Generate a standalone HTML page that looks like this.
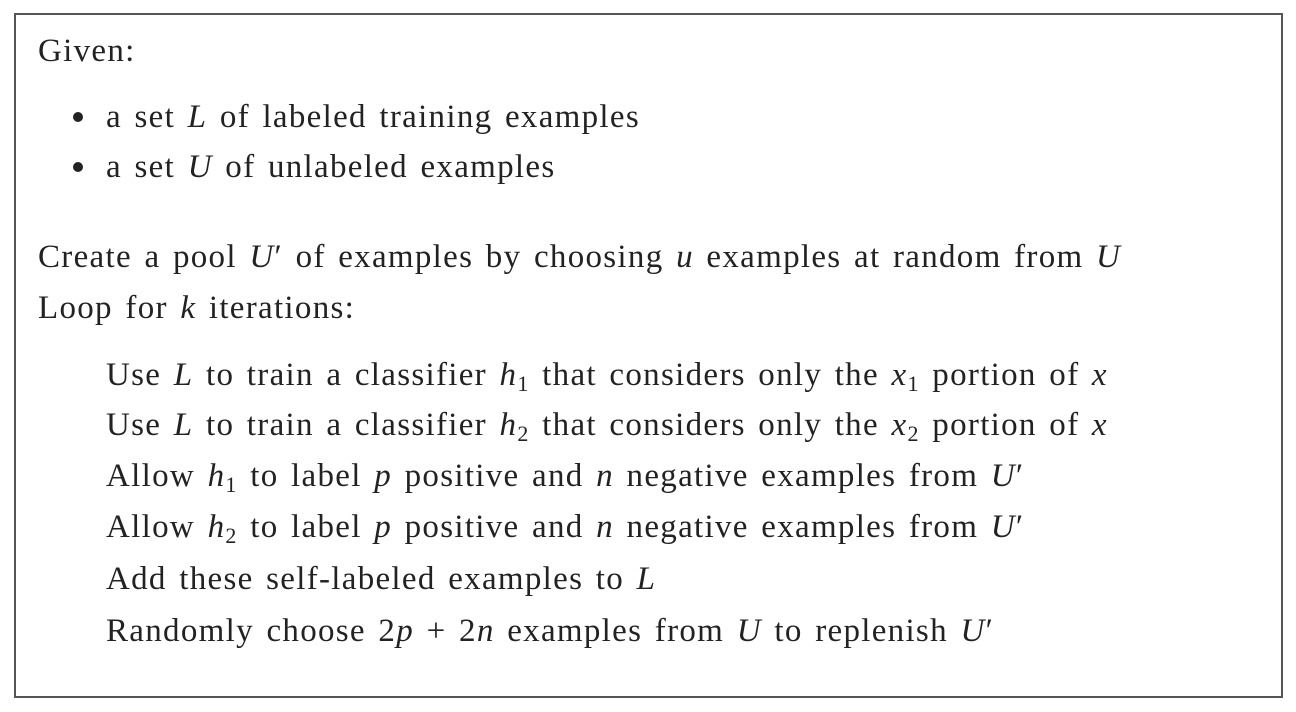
<!DOCTYPE html>
<html><head><meta charset="utf-8"><style>
body{margin:0;width:1296px;height:712px;background:#fff;position:relative;overflow:hidden;font-family:"Liberation Serif",serif;font-size:33px;color:#222;}
.box{position:absolute;left:14px;top:13px;width:1265px;height:681px;border:2px solid #555;}
.l{position:absolute;line-height:40px;white-space:nowrap;letter-spacing:1.3px;word-spacing:3px;}
i{font-style:italic}
sub{font-size:22px;vertical-align:-6px;line-height:0}
.b{position:absolute;width:10px;height:10px;border-radius:50%;background:#222;left:73px;}
</style></head><body>
<div class="box"></div>
<div class="l" style="left:38px;top:31px">Given:</div>
<div class="b" style="top:112px"></div>
<div class="l" style="left:106px;top:97px">a set <i>L</i> of labeled training examples</div>
<div class="b" style="top:162px"></div>
<div class="l" style="left:106px;top:147px">a set <i>U</i> of unlabeled examples</div>
<div class="l" style="left:38px;top:237px">Create a pool <i>U</i>′ of examples by choosing <i>u</i> examples at random from <i>U</i></div>
<div class="l" style="left:38px;top:288px">Loop for <i>k</i> iterations:</div>
<div class="l" style="left:106px;top:355px">Use <i>L</i> to train a classifier <i>h</i><sub>1</sub> that considers only the <i>x</i><sub>1</sub> portion of <i>x</i></div>
<div class="l" style="left:106px;top:405px">Use <i>L</i> to train a classifier <i>h</i><sub>2</sub> that considers only the <i>x</i><sub>2</sub> portion of <i>x</i></div>
<div class="l" style="left:106px;top:456px">Allow <i>h</i><sub>1</sub> to label <i>p</i> positive and <i>n</i> negative examples from <i>U</i>′</div>
<div class="l" style="left:106px;top:507px">Allow <i>h</i><sub>2</sub> to label <i>p</i> positive and <i>n</i> negative examples from <i>U</i>′</div>
<div class="l" style="left:106px;top:559px">Add these self-labeled examples to <i>L</i></div>
<div class="l" style="left:106px;top:611px">Randomly choose 2<i>p</i> + 2<i>n</i> examples from <i>U</i> to replenish <i>U</i>′</div>
</body></html>
